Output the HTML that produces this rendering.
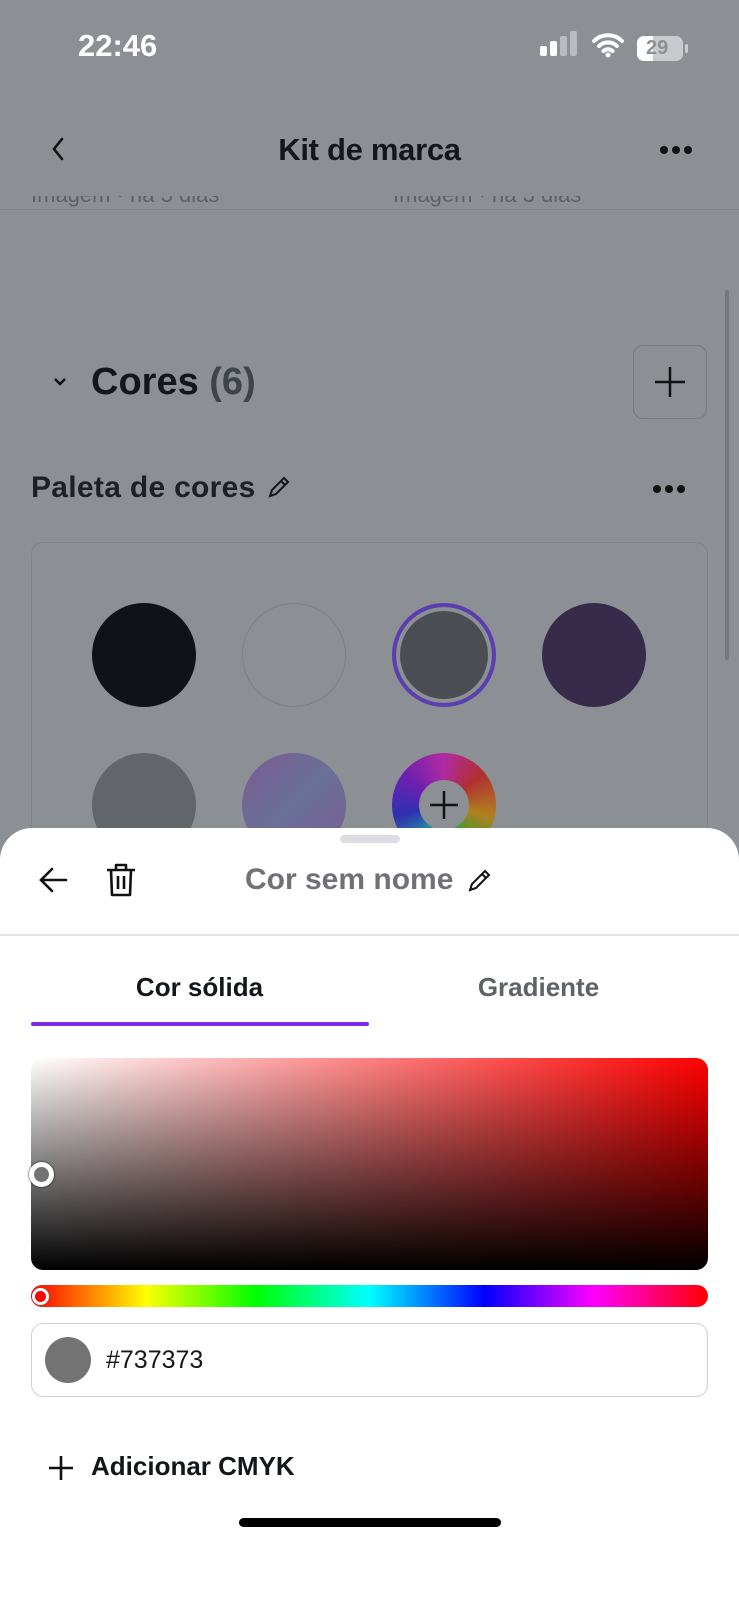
<!DOCTYPE html>
<html><head><meta charset="utf-8"><style>
*{margin:0;padding:0;box-sizing:border-box}
body{width:739px;height:1600px;background:#8c9095;position:relative;overflow:hidden;font-family:"Liberation Sans",sans-serif}
.a{position:absolute}
.c{position:absolute;border-radius:50%;width:104px;height:104px}
.d{display:inline-block;width:8px;height:8px;border-radius:50%;background:#111;margin-right:4px}
</style></head><body>
<div class="a" style="left:78px;top:28px;color:#fff;font-size:31px;font-weight:bold">22:46</div>
<div class="a" style="left:540px;top:46px;width:7px;height:10px;background:#fff;border-radius:2px"></div>
<div class="a" style="left:550px;top:41px;width:7px;height:15px;background:#fff;border-radius:2px"></div>
<div class="a" style="left:560px;top:36px;width:7px;height:20px;background:#b8bbbf;border-radius:2px"></div>
<div class="a" style="left:570px;top:31px;width:7px;height:25px;background:#b8bbbf;border-radius:2px"></div>
<svg class="a" style="left:592px;top:32px" width="32" height="26" viewBox="0 0 32 26"><path d="M2 9a20 20 0 0 1 28 0M7 14a13 13 0 0 1 18 0M11.5 19a6.5 6.5 0 0 1 9 0" stroke="#fff" stroke-width="4" fill="none" stroke-linecap="round"/><circle cx="16" cy="23" r="2.5" fill="#fff"/></svg>
<div class="a" style="left:637px;top:36px;width:46px;height:25px;border-radius:7px;background:#c8cacd;overflow:hidden"><div style="width:16px;height:25px;background:#fff"></div><span class="a" style="left:9px;top:1px;font-size:20px;font-weight:bold;color:#8c9095">29</span></div>
<div class="a" style="left:685px;top:44px;width:3px;height:9px;background:#c8cacd;border-radius:2px"></div>
<svg class="a" style="left:50px;top:136px" width="16" height="26"><path d="M12 3L4 13l8 10" stroke="#111" stroke-width="2.6" fill="none" stroke-linecap="round"/></svg>
<div class="a" style="left:0;width:739px;top:132px;text-align:center;font-size:31px;font-weight:bold;color:#13171c;letter-spacing:-0.3px">Kit de marca</div>
<div class="a" style="left:660px;top:146px;font-size:0"><span class="d"></span><span class="d"></span><span class="d" style="margin:0"></span></div>
<div class="a" style="left:31px;top:196px;font-size:22px;color:#5d6167;height:12px;overflow:hidden;line-height:22px;"><span style="position:relative;top:-12px">Imagem · há 3 dias</span></div>
<div class="a" style="left:393px;top:196px;font-size:22px;color:#5d6167;height:12px;overflow:hidden;line-height:22px;"><span style="position:relative;top:-12px">Imagem · há 3 dias</span></div>
<div class="a" style="left:0;top:209px;width:739px;height:1px;background:#80848a"></div>
<svg class="a" style="left:52px;top:376px" width="16" height="12"><path d="M3 3l5 5 5-5" stroke="#111" stroke-width="2.5" fill="none"/></svg>
<div class="a" style="left:91px;top:361px;font-size:38px;font-weight:bold;color:#13171c">Cores <span style="color:#3f434a">(6)</span></div>
<div class="a" style="left:633px;top:345px;width:74px;height:74px;border:1.5px solid #767a80;border-radius:10px"></div>
<svg class="a" style="left:652px;top:364px" width="36" height="36"><path d="M18 3v30M3 18h30" stroke="#111" stroke-width="2.5"/></svg>
<div class="a" style="left:31px;top:471px;font-size:30px;font-weight:bold;color:#1d2126;letter-spacing:0.3px">Paleta de cores</div>
<svg class="a" style="left:266px;top:474px" width="26" height="26"><path d="M4 22l2-6L18 4l4 4L10 20z M15 7l4 4" stroke="#13171c" stroke-width="2" fill="none"/></svg>
<div class="a" style="left:653px;top:485px;font-size:0"><span class="d"></span><span class="d"></span><span class="d" style="margin:0"></span></div>
<div class="a" style="left:31px;top:542px;width:677px;height:400px;border:1.5px solid #80848a;border-radius:12px"></div>
<div class="a" style="left:725px;top:290px;width:4px;height:370px;background:#74787d;border-radius:2px"></div>
<div class="c" style="left:92px;top:603px;background:#0f1317"></div>
<div class="c" style="left:242px;top:603px;border:1.5px solid #7d8187"></div>
<div class="c" style="left:392px;top:603px;border:4px solid #5b3fb0;background:#4a4e52;box-shadow:inset 0 0 0 4px #8c9095"></div>
<div class="c" style="left:542px;top:603px;background:#362b4a"></div>
<div class="c" style="left:92px;top:753px;background:#62666b"></div>
<div class="c" style="left:242px;top:753px;background:linear-gradient(135deg,#7a5c96,#6a7096 50%,#7a5c96)"></div>
<div class="c" style="left:392px;top:753px;background:conic-gradient(#b02ba0,#b03030,#b08020,#30a030,#20a0a0,#3030b0,#7020b0,#b02ba0)"></div>
<div class="c" style="left:419px;top:780px;width:50px;height:50px;background:#8c9095"></div>
<svg class="a" style="left:428px;top:789px" width="32" height="32"><path d="M16 2v28M2 16h28" stroke="#111" stroke-width="2.5"/></svg>
<div class="a" style="left:0;top:828px;width:739px;height:772px;background:#fff;border-radius:32px 32px 0 0"></div>
<div class="a" style="left:340px;top:835px;width:60px;height:8px;border-radius:4px;background:#dcdee1"></div>
<svg class="a" style="left:36px;top:864px" width="34" height="32"><path d="M30 16H5M16 5L5 16l11 11" stroke="#111" stroke-width="2.6" fill="none" stroke-linecap="round"/></svg>
<svg class="a" style="left:104px;top:861px" width="34" height="38"><path d="M3 9h28M12 9V4h10v5M7 9l1 25h18l1-25M14 15v13M20 15v13" stroke="#111" stroke-width="2.6" fill="none" stroke-linejoin="round"/></svg>
<div class="a" style="left:245px;top:863px;font-size:30px;font-weight:bold;color:#6f7176">Cor sem nome</div>
<svg class="a" style="left:466px;top:866px" width="28" height="28"><path d="M4 24l2-6L19 5l4 4L10 22z M16 8l4 4" stroke="#111" stroke-width="2" fill="none"/></svg>
<div class="a" style="left:0;top:934px;width:739px;height:2px;background:#e3e4e6"></div>
<div class="a" style="left:31px;top:972px;width:337px;text-align:center;font-size:26px;font-weight:bold;color:#13171c">Cor sólida</div>
<div class="a" style="left:370px;top:972px;width:337px;text-align:center;font-size:26px;font-weight:bold;color:#5f6368">Gradiente</div>
<div class="a" style="left:31px;top:1022px;width:338px;height:4px;background:#7d2ae8;border-radius:2px"></div>
<div class="a" style="left:31px;top:1058px;width:677px;height:212px;border-radius:12px;background:linear-gradient(to bottom,rgba(0,0,0,0),#000),linear-gradient(to right,#fff,#f00)"></div>
<div class="a" style="left:29px;top:1162px;width:25px;height:25px;border-radius:50%;border:5px solid #fff;background:#737373;box-shadow:0 0 2px #000"></div>
<div class="a" style="left:31px;top:1285px;width:677px;height:22px;border-radius:11px;background:linear-gradient(to right,#f00,#ff0 17%,#0f0 33%,#0ff 50%,#00f 67%,#f0f 83%,#f00)"></div>
<div class="a" style="left:32px;top:1288px;width:17px;height:17px;border-radius:50%;border:3px solid #fff;background:#f00;box-shadow:0 0 2px #555"></div>
<div class="a" style="left:31px;top:1323px;width:677px;height:74px;border:1.5px solid #cfd1d4;border-radius:12px"></div>
<div class="a" style="left:45px;top:1337px;width:46px;height:46px;border-radius:50%;background:#737373"></div>
<div class="a" style="left:106px;top:1346px;font-size:25px;color:#13171c">#737373</div>
<svg class="a" style="left:48px;top:1455px" width="26" height="26"><path d="M13 1v24M1 13h24" stroke="#111" stroke-width="2.6"/></svg>
<div class="a" style="left:91px;top:1451px;font-size:26px;font-weight:bold;color:#13171c">Adicionar CMYK</div>
<div class="a" style="left:239px;top:1518px;width:262px;height:9px;border-radius:5px;background:#000"></div>
</body></html>
